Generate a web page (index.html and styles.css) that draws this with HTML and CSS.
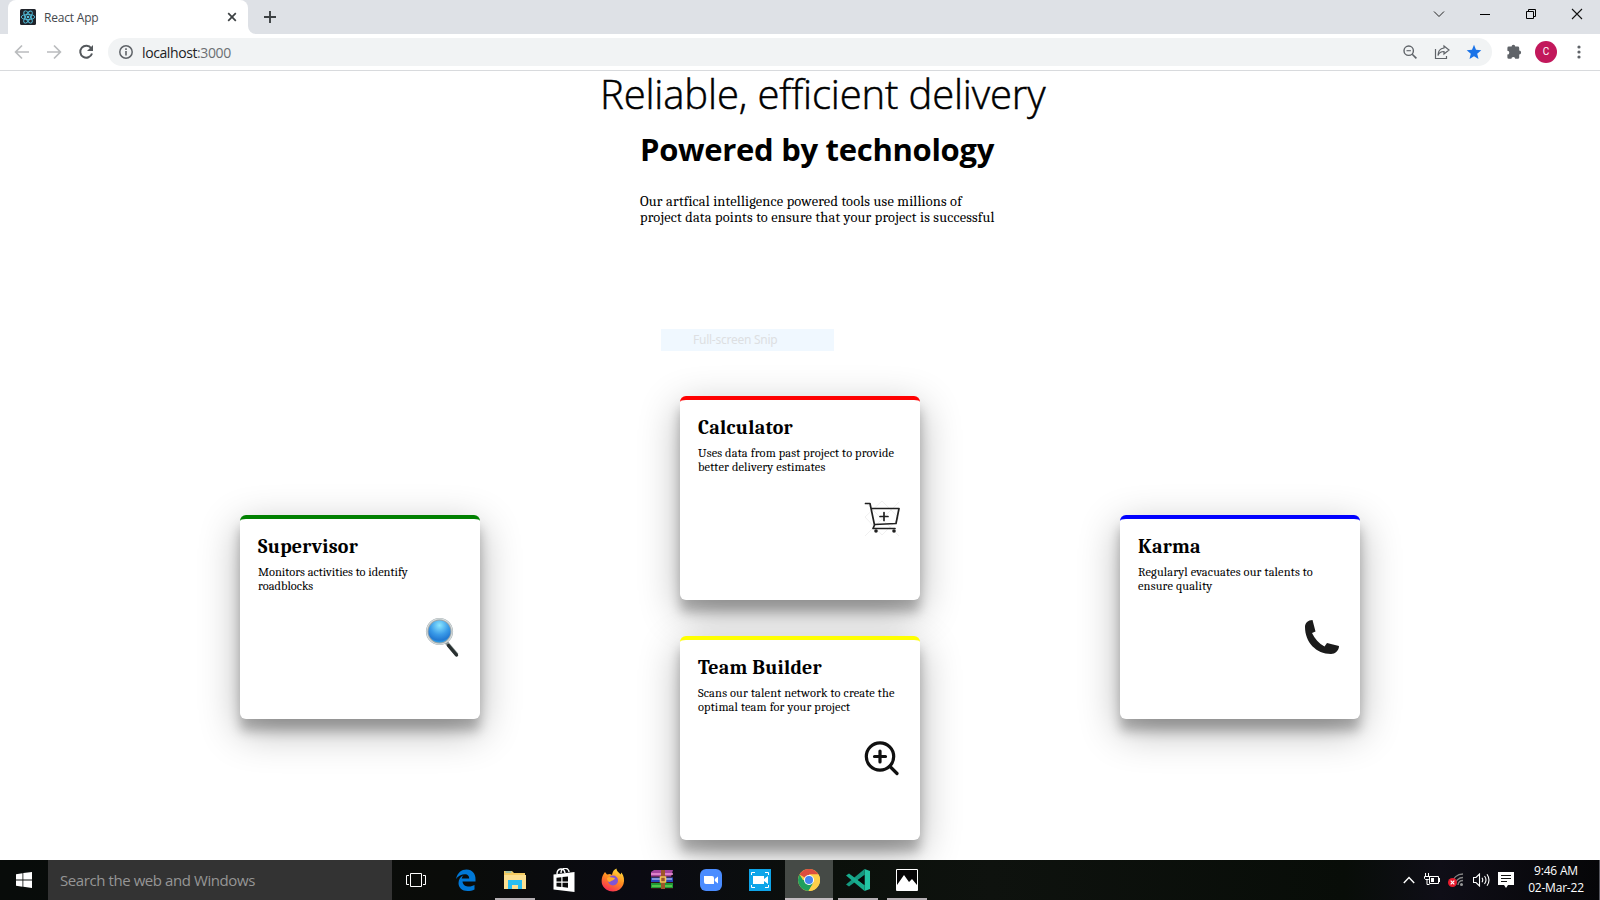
FILE: index.html
```html
<!DOCTYPE html>
<html lang="en">
<head>
<meta charset="utf-8">
<title>React App</title>
<link rel="stylesheet" href="styles.css">
</head>
<body>
<header class="tabstrip">
  <div class="tab">
    <svg class="favicon" width="16" height="16" viewBox="0 0 16 16"><rect width="16" height="16" rx="1.5" fill="#20232a"/><g fill="none" stroke="#53c1de" stroke-width=".9"><ellipse cx="8" cy="8" rx="6.8" ry="2.6"/><ellipse cx="8" cy="8" rx="6.8" ry="2.6" transform="rotate(60 8 8)"/><ellipse cx="8" cy="8" rx="6.8" ry="2.6" transform="rotate(120 8 8)"/></g><circle cx="8" cy="8" r="1.3" fill="#53c1de"/></svg>
    <span class="tab-title">React App</span>
    <svg class="tab-close" width="10" height="10" viewBox="0 0 10 10"><path d="M1.2 1.2l7.6 7.6M8.800 1.200l-7.600 7.600" stroke="#3c4043" stroke-width="1.700"/></svg>
  </div>
  <svg class="tab-flare" width="8" height="8" viewBox="0 0 8 8"><path d="M0 0v8h8A8 8 0 0 1 0 0z" fill="#fff"/></svg>
  <svg class="newtab" width="14" height="14" viewBox="0 0 14 14"><path d="M7 1v12M1 7h12" stroke="#3c4043" stroke-width="1.900"/></svg>
  <div class="window-buttons">
    <svg width="12" height="12" viewBox="0 0 12 12"><path d="M1 3.500l5 5 5-5" fill="none" stroke="#222"/></svg>
    <svg width="12" height="12" viewBox="0 0 12 12"><path d="M1 6.500h10" stroke="#000"/></svg>
    <svg width="12" height="12" viewBox="0 0 12 12"><path d="M1.500 3.500h7v7h-7zM3.500 3.500v-2h7v7h-2" fill="none" stroke="#000"/></svg>
    <svg width="12" height="12" viewBox="0 0 12 12"><path d="M1 1l10 10M11 1L1 11" stroke="#111" stroke-width="1.100"/></svg>
  </div>
</header>
<nav class="toolbar">
  <svg width="16" height="16" viewBox="0 0 16 16"><path d="M15 8H2M8 1.500L1.600 8 8 14.500" fill="none" stroke="#babcbe" stroke-width="1.700"/></svg>
  <svg width="16" height="16" viewBox="0 0 16 16"><path d="M1 8h13M8 1.500L14.400 8 8 14.500" fill="none" stroke="#babcbe" stroke-width="1.700"/></svg>
  <svg width="16" height="16" viewBox="0 0 16 16"><path d="M13.200 4.300A6 6 0 1 0 14 9.500" fill="none" stroke="#54585c" stroke-width="2"/><path d="M15 1v6H9z" fill="#54585c"/></svg>
  <div class="omnibox">
    <svg width="14" height="14" viewBox="0 0 14 14"><circle cx="7" cy="7" r="6.200" fill="none" stroke="#5f6368" stroke-width="1.500"/><path d="M7 6v4.500M7 3.300v1.600" stroke="#5f6368" stroke-width="1.600"/></svg>
    <span class="url">localhost<span class="port">:3000</span></span>
    <div class="omni-actions">
      <svg width="14" height="14" viewBox="0 0 14 14"><circle cx="5.700" cy="5.700" r="4.700" fill="none" stroke="#5f6368" stroke-width="1.400"/><path d="M9.200 9.200l4.200 4.200" stroke="#5f6368" stroke-width="1.600"/><path d="M3.500 5.700h4.400" stroke="#5f6368" stroke-width="1.100"/></svg>
      <svg width="16" height="16" viewBox="0 0 16 16"><path d="M1.500 5v9.500h11V12M10 2l5 4-5 4V7.500c-3 0-5 1.200-6 4 0-4 2-7 6-7.500z" fill="none" stroke="#5f6368" stroke-width="1.200"/></svg>
      <svg width="16" height="16" viewBox="0 0 16 16"><path d="M8 .8l2 5 5.300.4-4.100 3.500 1.300 5.300L8 12.200 3.500 15l1.300-5.300L.7 6.200 6 5.800z" fill="#1a73e8"/></svg>
    </div>
  </div>
  <svg class="puzzle" width="16" height="16" viewBox="0 0 16 16"><path d="M4.800 3a1.800 1.800 0 0 1 3.600 0H11a1.400 1.400 0 0 1 1.400 1.400V7a1.900 1.900 0 0 1 0 3.800v3a1.400 1.400 0 0 1-1.400 1.400H8.400a1.900 1.900 0 0 0-3.800 0H2A1.400 1.400 0 0 1 .6 13.800V11a1.900 1.900 0 0 0 0-3.800V4.400A1.400 1.400 0 0 1 2 3z" fill="#5f6368" transform="translate(.8 -.4)"/></svg>
  <span class="avatar">C</span>
  <svg class="kebab" width="4" height="14" viewBox="0 0 4 14"><g fill="#5f6368"><circle cx="2" cy="2" r="1.600"/><circle cx="2" cy="7" r="1.600"/><circle cx="2" cy="12" r="1.600"/></g></svg>
</nav>
<main class="page">
  <section class="hero">
    <h1>Reliable, efficient delivery</h1>
    <h2>Powered by technology</h2>
    <p class="l1">Our artfical intelligence powered tools use millions of</p>
    <p class="l2">project data points to ensure that your project is successful</p>
  </section>
  <div class="snip"><span>Full-screen Snip</span></div>
  <section class="cards">
    <article class="card side green">
      <h3>Supervisor</h3>
      <p class="tight">Monitors activities to identify<br>roadblocks</p>
      <svg class="art" width="36" height="42" viewBox="0 0 36 42"><defs><radialGradient id="lens" cx=".5" cy=".25" r=".75"><stop offset="0" stop-color="#8be6ff"/><stop offset=".5" stop-color="#3a9be8"/><stop offset=".8" stop-color="#2279d2"/><stop offset="1" stop-color="#32b8f2"/></radialGradient></defs><path d="M22 26l11 13" stroke="#8b9595" stroke-width="3.600"/><path d="M24.500 29.500l8 9.500" stroke="#293030" stroke-width="3.400" stroke-linecap="round"/><circle cx="15.500" cy="15.500" r="12.300" fill="url(#lens)" stroke="#9aa5aa" stroke-width="2.600"/><circle cx="15.500" cy="15.500" r="12.600" fill="none" stroke="#d6dcdc" stroke-width="1.300"/></svg>
    </article>
    <div class="stack">
      <article class="card red">
        <h3>Calculator</h3>
        <p>Uses data from past project to provide<br>better delivery estimates</p>
        <svg class="art" width="36" height="42" viewBox="0 0 36 42"><path d="M1 18L18 2l17 17-17 17zM1 3l34 34M35 3L1 37" fill="none" stroke="#f0f0f0"/><g fill="none" stroke="#202020" stroke-width="1.700" stroke-linejoin="round" stroke-linecap="round"><path d="M1.500 4.500H6L10.500 26 9 29.500h22M7.500 9.500H35L32 24.500l-21.500 1"/><path d="M20 13.500v8M16 17.500h8"/></g><circle cx="12" cy="32" r="1.800" fill="#202020"/><circle cx="30" cy="32" r="1.800" fill="#202020"/></svg>
      </article>
      <article class="card yellow">
        <h3>Team Builder</h3>
        <p>Scans our talent network to create the<br>optimal team for your project</p>
        <svg class="art" width="36" height="42" viewBox="0 0 36 42"><g fill="none" stroke="#101010" stroke-width="3.200" stroke-linecap="round"><circle cx="16" cy="17.500" r="13.700"/><path d="M26 27.500l7 7M16 12v11M10.500 17.500h11"/></g></svg>
      </article>
    </div>
    <article class="card side blue">
      <h3>Karma</h3>
      <p>Regularyl evacuates our talents to<br>ensure quality</p>
      <svg class="art" width="36" height="42" viewBox="0 0 36 42"><path d="M1 11C1 7 4 4 8.500 4L11.500 15.500l-3.500 1.500C10.500 22.500 15 27.500 20.500 30.500l2.500-3.500 12 3C35 34.500 31 38 27 38 12 38 1 26 1 11z" fill="#1b1b1b"/></svg>
    </article>
  </section>
</main>
<footer class="taskbar">
  <div class="start"><svg width="16" height="16" viewBox="0 0 16 16"><path d="M0 2.200L6.500 1.300v6.200H0zM7.300 1.100L16 0v7.500H7.300zM0 8.400h6.500v6.300L0 13.800zM7.300 8.400H16V16l-8.700-1.200z" fill="#fff"/></svg></div>
  <div class="search">Search the web and Windows</div>
  <div class="apps">
    <div class="app first"><svg width="20" height="14" viewBox="0 0 20 14"><path d="M4.500.5h11v13h-11zM3 2.500H.5v9H3M17 2.500h2.500v9H17" fill="none" stroke="#fff"/></svg></div>
    <div class="app"><svg width="22" height="22" viewBox="0 0 22 22"><path d="M1 10C2.500 3.500 6.500.5 11.500.5c6 0 9 4.500 9 9.500v2.500H7.500c.3 3.700 3.500 5 6.500 5 2 0 4-.6 5.500-1.500v4.500c-2 1-4.400 1.500-7 1.500-5.500 0-9-3.300-9-8 0-3.700 2-6.300 5-7.700-1 1-1.600 2-1.800 3.200h7.500c0-2.500-1.500-4.200-4-4.200C6.500 5.300 3 7 1 10z" fill="#0078d7"/></svg></div>
    <div class="app open"><svg width="22" height="20" viewBox="0 0 22 20"><path d="M0 1h8l2 2h11v16H0z" fill="#f4cb61"/><path d="M0 5h22v14H0z" fill="#fbdf91"/><path d="M1.500 2h6" stroke="#51b5e5"/><path d="M4 19v-9h14v9h-4v-4H8v4z" fill="#27bdf2"/></svg></div>
    <div class="app"><svg width="22" height="24" viewBox="0 0 22 24"><path d="M.5 6.500L21.500 4v20L.5 21.500z" fill="#fff"/><path d="M4 6c0-6 7-7 8-1M8 5c0-6 8-6 8-1" fill="none" stroke="#fff" stroke-width="1.400"/><path d="M3.500 9.700l4.800-.5v4.300H3.500zM9.500 9l5.500-.6v5.100H9.500zM3.500 14.700h4.800v4.200l-4.800-.5zM9.500 14.700H15v5l-5.500-.6z" fill="#090909"/></svg></div>
    <div class="app"><svg width="24" height="24" viewBox="0 0 24 24"><defs><linearGradient id="fox" x1=".8" y1="0" x2=".3" y2="1"><stop offset="0" stop-color="#ffe23d"/><stop offset=".5" stop-color="#ff8b20"/><stop offset="1" stop-color="#f72a55"/></linearGradient></defs><path d="M4 4l2 2.500L9 6l2 1C11.500 3.500 13 1.500 15.500.5c0 3 3 4 4 6l1-2C23 8 23.700 12 22.500 16 21 20.500 17 23.500 12 23.500S2.500 20.500 1 16C0 11 1.500 7 4 4z" fill="url(#fox)"/><circle cx="12" cy="12.500" r="5" fill="#8055d5"/><path d="M6 10c3-2 5 0 8 0-1 3-4 2-5 4-2 0-3-2-3-4z" fill="#ffab29"/></svg></div>
    <div class="app"><svg width="24" height="20" viewBox="0 0 24 20"><path d="M1 2L4 0h19l-2 7H1z" fill="#a545a0"/><path d="M1 4h22" stroke="#f096d8" stroke-width="1.500"/><path d="M1 7h22v5H1z" fill="#2846bd"/><path d="M2 9h20" stroke="#d9dfff"/><path d="M1 13h22v5H1z" fill="#209b36"/><path d="M2 16h20" stroke="#8bef62"/><path d="M1 7h22M1 12.500h22M1 18.500h22" stroke="#311515"/><path d="M11 0h4v19h-4z" fill="#9d5629"/><path d="M10.500 7h5v5h-5z" fill="none" stroke="#efc35b" stroke-width="1.500"/></svg></div>
    <div class="app"><svg width="22" height="22" viewBox="0 0 22 22"><rect width="22" height="22" rx="6" fill="#4a8cff"/><path d="M4 7h8q2 0 2 2v6H6q-2 0-2-2zM14.800 10L18 7.500v7L14.800 12z" fill="#fff"/></svg></div>
    <div class="app"><svg width="22" height="22" viewBox="0 0 22 22"><path d="M0 0h22v22H0z" fill="#0ea5e9"/><path d="M4 7h11v3l4-3v8l-4-3v3H4z" fill="#fff"/><path d="M2.500 6V3.500H6M16 3.500h3.500V6M2.500 16v2.500H6M16 18.500h3.500V16" fill="none" stroke="#fff"/></svg></div>
    <div class="app active"><svg width="22" height="22" viewBox="0 0 22 22"><circle cx="11" cy="11" r="11" fill="#fdd04b"/><path d="M11 11L1.500 5.500A11 11 0 0 1 20.500 5.500H11z" fill="#dd4d40"/><path d="M1.500 5.500A11 11 0 0 0 10.500 22l5-8.500L11 11H5z" fill="#1f9f5e"/><path d="M11 5.500h9.500A11 11 0 0 1 10.500 22l5.300-8.500z" fill="#fdd04b"/><circle cx="11" cy="11" r="5" fill="#fff"/><circle cx="11" cy="11" r="4" fill="#4585f2"/></svg></div>
    <div class="app open"><svg width="24" height="22" viewBox="0 0 24 22"><path d="M18.500 0L24 2v18l-5.500 2z" fill="#23c5a4"/><path d="M18.500 0v6L3 17.500 0 15.500z" fill="#159a80"/><path d="M0 6.500L3 4.500 18.500 16v6z" fill="#18ad8e"/><path d="M18.500 6v10L12 11z" fill="#050706"/></svg></div>
    <div class="app open"><svg width="22" height="22" viewBox="0 0 22 22"><path d="M.5.5h21v21H.5z" fill="#050505" stroke="#fff"/><path d="M1 16l7-10 5 7 3-3 5 6v5H1z" fill="#fff"/></svg></div>
  </div>
  <div class="tray">
    <svg width="12" height="8" viewBox="0 0 12 8"><path d="M.8 7L6 1.500 11.200 7" fill="none" stroke="#fff" stroke-width="1.400"/></svg>
    <svg width="16" height="14" viewBox="0 0 16 14"><path d="M5.500 3.500h9v7h-9zM15.500 5v4M1.500 0v3M4.500 0v3M.5 3.500h5v2l-1 1h-3l-1-1zM3 7v4.500h2.500" fill="none" stroke="#fff"/><path d="M7 5h3v4H7z" fill="#fff"/></svg>
    <svg width="16" height="14" viewBox="0 0 16 14"><g fill="none" stroke="#858585" stroke-width="1.300"><path d="M4 10C5 5 9 1 15 1M7 12c0-4 4-7.500 8-7.500M10 12c0-2.500 2-4.500 5-4.500"/></g><circle cx="13.500" cy="11.500" r="1.500" fill="#999"/><circle cx="4.500" cy="9.500" r="4.500" fill="#e81b2d"/><path d="M2.700 7.700l3.600 3.600M6.300 7.700l-3.600 3.600" stroke="#fff" stroke-width="1.200"/></svg>
    <svg width="17" height="14" viewBox="0 0 17 14"><path d="M.5 4.500H3L6.500 1v12L3 9.500H.5zM9 4.800q1.500 2.200 0 4.400M11.500 3q3 4 0 8M14 1.200q4 5.800 0 11.600" fill="none" stroke="#fff" stroke-width="1.100"/></svg>
    <svg width="16" height="16" viewBox="0 0 16 16"><path d="M0 0h16v13h-6l-2 3-2-3H0z" fill="#fff"/><path d="M3 3.500h10M3 6.500h10M3 9.500h6" stroke="#111"/></svg>
  </div>
  <div class="clock"><span class="time">9:46 AM</span><span class="date">02-Mar-22</span></div>
</footer>
</body>
</html>
```
FILE: styles.css
```css
* { box-sizing: border-box; }
body { margin: 0; width: 1600px; height: 900px; overflow: hidden; display: flex; flex-direction: column; background: #fff; font-family: "Noto Sans", "Open Sans", sans-serif; color: #000; }
svg { display: block; flex: none; }
h1, h2, h3, p { margin: 0; white-space: nowrap; }
.tabstrip { height: 34px; flex: none; background: #dee1e6; display: flex; align-items: center; padding-left: 8px; }
.tab { width: 240px; height: 34px; background: #fff; border-radius: 8px 8px 0 0; display: flex; align-items: center; padding: 0 11px 0 12px; }
.tab-title { font-family: "Open Sans", "Noto Sans", sans-serif; font-size: 12px; letter-spacing: -.2px; margin-left: 8px; color: #45494d; flex: 1; }
.tab-flare { align-self: flex-end; }
.newtab { margin-left: 7px; }
.window-buttons { margin-left: auto; display: flex; gap: 34px; padding: 0 17px 6px 0; }
.toolbar { height: 37px; flex: none; border-bottom: 1px solid #d8dadd; display: flex; align-items: center; padding: 0 19px 0 14px; gap: 16px; }
.omnibox { flex: 1; height: 28px; margin-left: -2px; border-radius: 14px; background: #f1f3f4; display: flex; align-items: center; padding: 0 10px 0 11px; }
.url { font-family: "Open Sans", "Noto Sans", sans-serif; font-size: 14px; letter-spacing: -.4px; margin-left: 9px; color: #202124; }
.port { color: #6b6f73; }
.omni-actions { margin-left: auto; display: flex; align-items: center; gap: 16.5px; }
.puzzle { margin-left: -2px; }
.avatar { width: 22px; height: 22px; margin-left: -3px; margin-right: 4px; border-radius: 50%; background: #c2185b; color: #fff; font: 10px/22px Roboto, sans-serif; text-align: center; }
.page { height: 789px; flex: none; }
.hero { height: 257px; display: flex; flex-direction: column; align-items: flex-start; padding-left: 640px; }
.hero h1 { margin-left: -40px; font: 300 40px/46px "Open Sans", "Noto Sans", sans-serif; letter-spacing: -.14px; -webkit-text-stroke: .5px #000; }
.hero h2 { margin-top: 8px; font: 700 31px/48px "Open Sans", "Noto Sans", sans-serif; letter-spacing: -.3px; }
.hero p, .card p, .card h3 { font-family: Cambria, Caladea, "Noto Serif", "Liberation Serif", serif; }
.hero p { font-size: 14.4px; line-height: 16px; letter-spacing: .18px; }
.hero .l1 { margin-top: 21px; }
.snip { width: 173px; height: 22px; margin: 1px 0 45px 661px; background: #f0f8ff; color: #dddfe2; padding-left: 32px; font-size: 12px; line-height: 22px; letter-spacing: -.25px; }
.cards { display: flex; align-items: center; justify-content: center; gap: 200px; height: 444px; }
.stack { display: flex; flex-direction: column; gap: 36px; }
.card { width: 240px; height: 204px; flex: none; border-top: 4px solid; border-radius: 6px; background: #fff; padding: 16px 18px; box-shadow: 0 12px 40px rgba(0,0,0,.3), 0 12px 12px rgba(0,0,0,.26); display: flex; flex-direction: column; }
.side { margin-bottom: 2px; }
.green { border-color: green; }
.red { border-color: red; }
.yellow { border-color: yellow; }
.blue { border-color: blue; }
.card h3 { font-size: 20px; line-height: 24px; letter-spacing: .25px; }
.card p { font-size: 12.4px; line-height: 14px; margin-top: 6px; letter-spacing: .14px; }
.card .tight { letter-spacing: 0; }
.art { align-self: flex-end; margin: 25px 2px 0 0; }
.side .art { margin-top: 23px; }
.taskbar { height: 40px; flex: none; display: flex; position: relative; background: linear-gradient(90deg, #080c0a, #0a0c09 28%, #0a0a12 40%, #0b100b 52%, #0e120e 62%, #080d08 84%, #0f0e17 90%, #060608); color: #fff; }
.start { width: 48px; display: flex; align-items: center; justify-content: center; }
.search { width: 344px; background: #333; color: #969696; padding-left: 12px; font-family: "Open Sans", "Noto Sans", sans-serif; font-size: 15px; line-height: 40px; letter-spacing: -.42px; white-space: nowrap; }
.apps { display: flex; gap: 1px; margin-left: 1px; }
.app { width: 48px; height: 40px; display: flex; align-items: center; justify-content: center; }
.first { padding-right: 2px; }
.open { background: linear-gradient(#b4aeb2, #b4aeb2) center bottom / 40px 2px no-repeat; }
.active { background: linear-gradient(#c2bcc0, #c2bcc0) center bottom / 48px 2px no-repeat #454a46; }
.tray { margin-left: auto; display: flex; align-items: center; gap: 8.5px; }
.clock { width: 83px; margin-left: 3px; padding: 2px 4px 0 0; border-right: 1px solid #55555c; display: flex; flex-direction: column; align-items: center; font-family: "Open Sans", "Noto Sans", sans-serif; font-size: 12px; line-height: 17px; letter-spacing: -.2px; white-space: nowrap; }
```
